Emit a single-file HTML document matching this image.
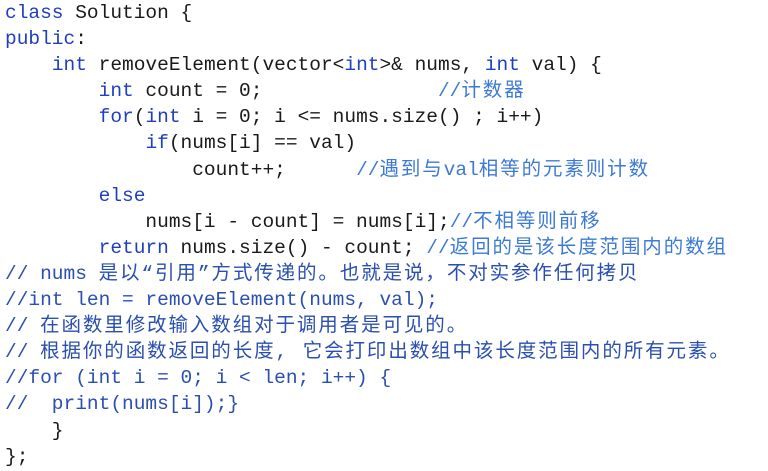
<!DOCTYPE html>
<html><head><meta charset="utf-8"><style>
html,body{margin:0;background:#fff;width:768px;height:471px;overflow:hidden}
pre{margin:0;padding:0 0 0 5px;font-family:"Liberation Mono","Noto Sans CJK SC",monospace;font-size:19.5px;line-height:26.1px;color:#1a1a1a}
.k{color:#1f3fbf}.c{color:#3d7ad6}.d{color:#2b4fb0}
i{font-style:normal;letter-spacing:1.9px}
</style></head><body><pre><span class="k">class</span> Solution {
<span class="k">public</span>:
    <span class="k">int</span> removeElement(vector&lt;<span class="k">int</span>&gt;&amp; nums, <span class="k">int</span> val) {
        <span class="k">int</span> count = 0;               <span class="c">//<i>计数器</i></span>
        <span class="k">for</span>(<span class="k">int</span> i = 0; i &lt;= nums.size() ; i++)
            <span class="k">if</span>(nums[i] == val)
                count++;      <span class="c">//<i>遇到与</i>val<i>相等的元素则计数</i></span>
        <span class="k">else</span>
            nums[i - count] = nums[i];<span class="c">//<i>不相等则前移</i></span>
        <span class="k">return</span> nums.size() - count; <span class="c">//<i>返回的是该长度范围内的数组</i></span>
<span class="d">// nums <i>是以“引用”方式传递的。也就是说，不对实参作任何拷贝</i></span>
<span class="d">//int len = removeElement(nums, val);</span>
<span class="d">// <i>在函数里修改输入数组对于调用者是可见的。</i></span>
<span class="d">// <i>根据你的函数返回的长度, 它会打印出数组中该长度范围内的所有元素。</i></span>
<span class="d">//for (int i = 0; i &lt; len; i++) {</span>
<span class="d">//  print(nums[i]);}</span>
    }
};</pre></body></html>
